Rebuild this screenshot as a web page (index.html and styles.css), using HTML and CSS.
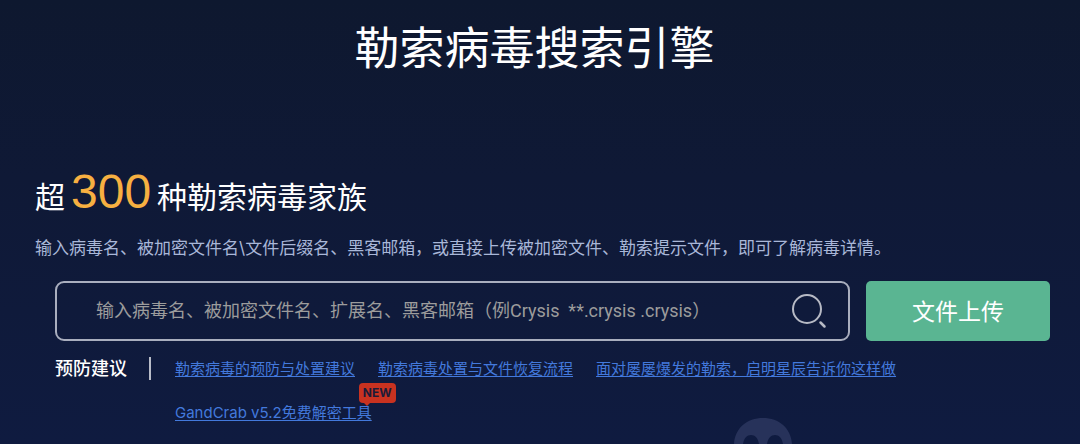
FILE: index.html
```html
<!DOCTYPE html>
<html lang="zh-CN">
<head>
<meta charset="utf-8">
<meta name="viewport" content="width=device-width, initial-scale=1">
<title>勒索病毒搜索引擎</title>
<link rel="stylesheet" href="styles.css">
</head>
<body>
<main class="page">
  <h1 class="title">勒索病毒搜索引擎</h1>
  <section class="intro">
    <h2 class="headline"><span>超</span><strong class="count">300</strong><span>种勒索病毒家族</span></h2>
    <p class="description">输入病毒名、被加密文件名\文件后缀名、黑客邮箱，或直接上传被加密文件、勒索提示文件，即可了解病毒详情。</p>
  </section>
  <form class="search">
    <div class="search-box">
      <input class="search-input" type="text" aria-label="搜索勒索病毒" placeholder="输入病毒名、被加密文件名、扩展名、黑客邮箱（例Crysis &nbsp;**.crysis .crysis）">
      <button class="search-button" type="button" aria-label="搜索">
        <svg width="36" height="36" viewBox="0 0 36 36" fill="none" stroke="currentColor" stroke-width="2" stroke-linecap="round" aria-hidden="true">
          <circle cx="16" cy="16" r="14"/>
          <path d="M29.500 29.500L33.500 33.500" stroke-width="2.500"/>
        </svg>
      </button>
    </div>
    <button class="upload" type="button">文件上传</button>
  </form>
  <section class="advice">
    <h3 class="advice-title">预防建议</h3>
    <nav class="links" aria-label="预防建议">
      <a href="#prevent">勒索病毒的预防与处置建议</a>
      <a href="#recover">勒索病毒处置与文件恢复流程</a>
      <a href="#story">面对屡屡爆发的勒索，启明星辰告诉你这样做</a>
      <a class="tool" href="#gandcrab">GandCrab v5.2免费解密工具<span class="badge">NEW</span></a>
    </nav>
  </section>
  <svg class="skull" width="58" height="26" viewBox="0 0 58 26" aria-hidden="true">
    <path fill="currentColor" fill-rule="evenodd" d="M0 26C1 10 13 0 29 0S57 10 58 26H49C48 20 45 17 41 17S34 20 33 26H25C24 20 21 17 17 17S10 20 9 26Z"/>
  </svg>
</main>
</body>
</html>
```
FILE: styles.css
```css
* {
  box-sizing: border-box;
}

body {
  margin: 0;
  font-family: Inter, "Noto Sans CJK SC", sans-serif;
  color: #fff;
  background: #0f1b40;
}

.page {
  position: relative;
  min-height: 100vh;
  padding: 16px 30px 16px 35px;
  background: linear-gradient(#0e182f, #0f1936 40%, #0f1b40);
}

.title {
  margin: 0;
  padding-right: 16px;
  font-size: 45px;
  font-weight: 400;
  line-height: 66px;
  text-align: center;
}

.intro {
  padding-top: 84px;
}

.headline {
  display: flex;
  align-items: baseline;
  gap: 6px;
  margin: 0;
  font-size: 30px;
  font-weight: 400;
  line-height: 52px;
}

.count {
  font-family: "Liberation Sans", sans-serif;
  font-size: 48px;
  font-weight: 400;
  color: #f7b041;
}

.description {
  margin: 12px 0 0;
  font-size: 17px;
  line-height: 26px;
  color: #a9b7d8;
}

.search {
  display: flex;
  gap: 16px;
  margin: 20px 0 0 20px;
}

.search-box {
  display: flex;
  flex: 1;
  align-items: center;
  padding: 0 21px 0 39px;
  border: 2px solid #a9aebe;
  border-radius: 9px;
}

.search-input {
  flex: 1;
  min-width: 0;
  padding: 0;
  border: 0;
  outline: 0;
  background: transparent;
  font-family: Roboto, "Noto Sans CJK SC", sans-serif;
  font-size: 18px;
  line-height: 26px;
  color: #fff;
}

.search-input::placeholder {
  color: #9c9c9c;
  opacity: 1;
}

.search-button {
  display: flex;
  padding: 0;
  border: 0;
  background: transparent;
  color: #b7bac5;
}

.upload {
  width: 184px;
  height: 60px;
  padding: 0 0 2px;
  border: 0;
  border-radius: 5px;
  background: #5ab592;
  font: inherit;
  font-size: 23px;
  color: #fff;
}

.advice {
  display: flex;
  align-items: flex-start;
  padding: 16px 0 0 20px;
}

.advice-title {
  margin: 0;
  padding-right: 22px;
  border-right: 2px solid #b8bcc8;
  font-size: 18px;
  font-weight: 500;
  line-height: 23px;
}

.links {
  display: flex;
  flex: 1;
  flex-wrap: wrap;
  gap: 20px 23px;
  padding-left: 24px;
  font-size: 15px;
  line-height: 24px;
}

.links a {
  color: #4379dc;
  text-decoration: underline;
  text-underline-offset: 2px;
}

.tool {
  position: relative;
}

.badge {
  position: absolute;
  right: -24px;
  bottom: 22px;
  padding: 0 4px;
  border-radius: 4px;
  background: #c83220;
  font-size: 12px;
  font-weight: 700;
  line-height: 20px;
  color: #1c1b38;
}

.badge::after {
  content: "";
  position: absolute;
  left: 5px;
  top: 100%;
  border: 3px solid transparent;
  border-top-color: #c83220;
  border-bottom: 0;
}

.skull {
  position: absolute;
  left: 68%;
  bottom: 0;
  color: #27325a;
}
```
